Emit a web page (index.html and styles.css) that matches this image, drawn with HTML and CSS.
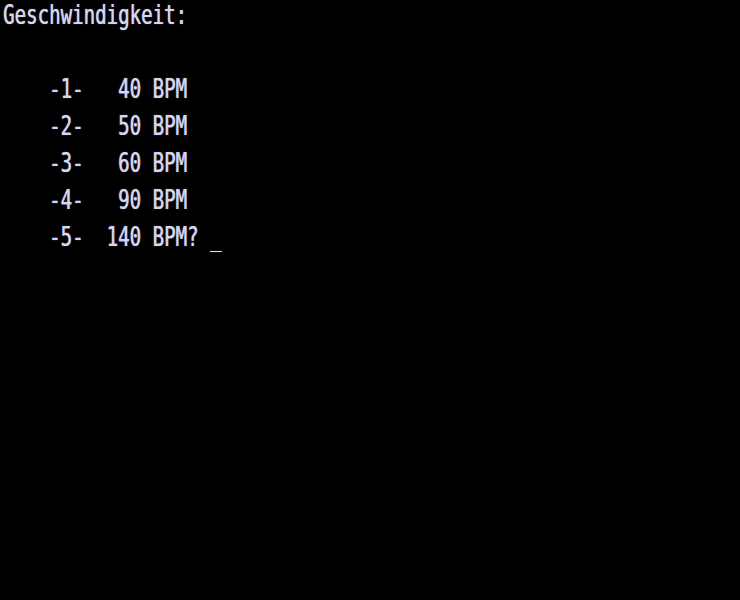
FILE: index.html
```html
<!DOCTYPE html>
<html lang="de">
<head>
<meta charset="utf-8">
<title>Geschwindigkeit</title>
<link rel="stylesheet" href="styles.css">
</head>
<body>
<main class="screen">
<div class="line"><span class="txt">Geschwindigkeit:</span></div>
<div class="line"><span class="txt"> </span></div>
<div class="line"><span class="txt">    -1-   40 BPM</span></div>
<div class="line"><span class="txt">    -2-   50 BPM</span></div>
<div class="line"><span class="txt">    -3-   60 BPM</span></div>
<div class="line"><span class="txt">    -4-   90 BPM</span></div>
<div class="line"><span class="txt">    -5-  140 BPM? <span class="cursor">_</span></span></div>
</main>
</body>
</html>
```
FILE: styles.css
```css
html, body {
  margin: 0;
  padding: 0;
  background: #000;
  width: 740px;
  height: 600px;
  overflow: hidden;
}
.screen {
  padding-left: 3px;
  color: #d6d6f4;
  font-family: "DejaVu Sans Mono", "Liberation Mono", monospace;
  font-size: 19.1px;
}
.line {
  height: 37px;
}
.txt {
  display: inline-block;
  white-space: pre;
  line-height: 19.1px;
  transform: scaleY(1.4);
  transform-origin: 0 0;
  text-shadow: 0.5px 0 0 rgba(214, 214, 244, 0.7), 0 0 1px rgba(214, 214, 244, 0.5);
}
```
